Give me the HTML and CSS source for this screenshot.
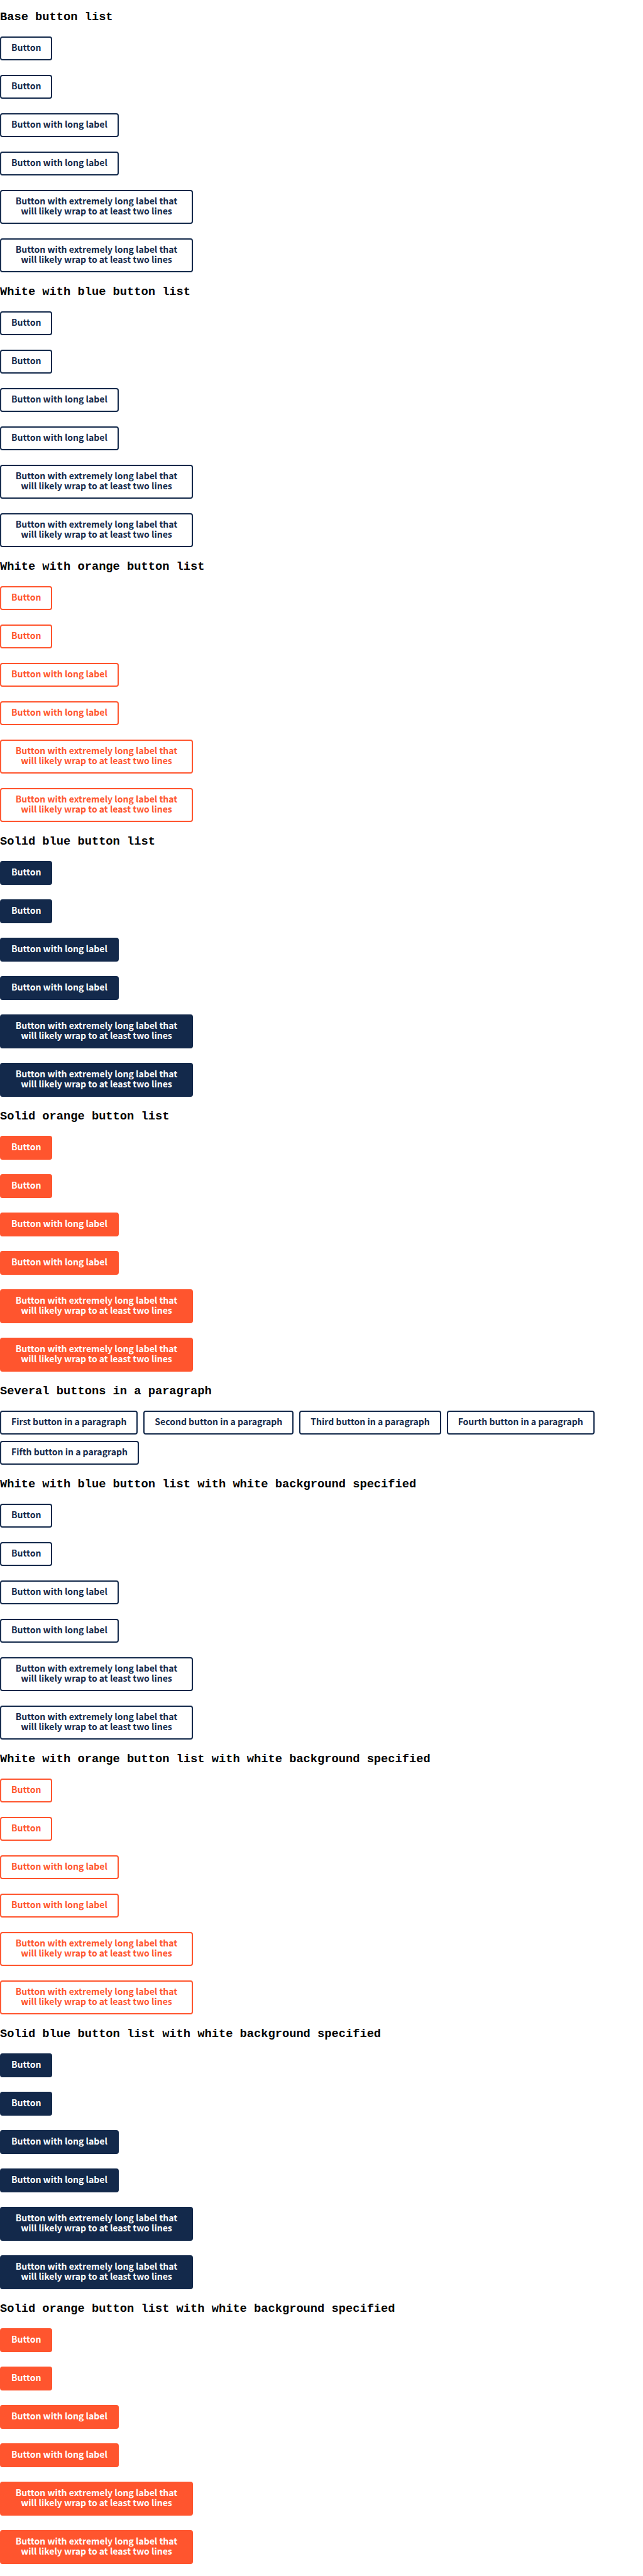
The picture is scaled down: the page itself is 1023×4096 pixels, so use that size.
FILE: index.html
```html
<!DOCTYPE html>
<html lang="en">
<head>
<meta charset="utf-8">
<meta name="viewport" content="width=device-width, initial-scale=1">
<title>Button styles</title>
<link rel="stylesheet" href="styles.css">
</head>
<body>
<main class="page">
<section class="group">
<h3 class="title">Base button list</h3>
<div class="list">
<a class="button" href="#">Button</a>
<button class="button" type="button">Button</button>
<a class="button" href="#">Button with long label</a>
<button class="button" type="button">Button with long label</button>
<a class="button" href="#">Button with extremely long label that will likely wrap to at least two lines</a>
<button class="button" type="button">Button with extremely long label that will likely wrap to at least two lines</button>
</div>
</section>
<section class="group">
<h3 class="title">White with blue button list</h3>
<div class="list">
<a class="button" href="#">Button</a>
<button class="button" type="button">Button</button>
<a class="button" href="#">Button with long label</a>
<button class="button" type="button">Button with long label</button>
<a class="button" href="#">Button with extremely long label that will likely wrap to at least two lines</a>
<button class="button" type="button">Button with extremely long label that will likely wrap to at least two lines</button>
</div>
</section>
<section class="group orange">
<h3 class="title">White with orange button list</h3>
<div class="list">
<a class="button" href="#">Button</a>
<button class="button" type="button">Button</button>
<a class="button" href="#">Button with long label</a>
<button class="button" type="button">Button with long label</button>
<a class="button" href="#">Button with extremely long label that will likely wrap to at least two lines</a>
<button class="button" type="button">Button with extremely long label that will likely wrap to at least two lines</button>
</div>
</section>
<section class="group solid">
<h3 class="title">Solid blue button list</h3>
<div class="list">
<a class="button" href="#">Button</a>
<button class="button" type="button">Button</button>
<a class="button" href="#">Button with long label</a>
<button class="button" type="button">Button with long label</button>
<a class="button" href="#">Button with extremely long label that will likely wrap to at least two lines</a>
<button class="button" type="button">Button with extremely long label that will likely wrap to at least two lines</button>
</div>
</section>
<section class="group orange solid">
<h3 class="title">Solid orange button list</h3>
<div class="list">
<a class="button" href="#">Button</a>
<button class="button" type="button">Button</button>
<a class="button" href="#">Button with long label</a>
<button class="button" type="button">Button with long label</button>
<a class="button" href="#">Button with extremely long label that will likely wrap to at least two lines</a>
<button class="button" type="button">Button with extremely long label that will likely wrap to at least two lines</button>
</div>
</section>
<section class="group">
<h3 class="title">Several buttons in a paragraph</h3>
<p class="paragraph">
<a class="button" href="#">First button in a paragraph</a>
<a class="button" href="#">Second button in a paragraph</a>
<a class="button" href="#">Third button in a paragraph</a>
<a class="button" href="#">Fourth button in a paragraph</a>
<a class="button" href="#">Fifth button in a paragraph</a>
</p>
</section>
<section class="group">
<h3 class="title">White with blue button list with white background specified</h3>
<div class="list">
<a class="button" href="#">Button</a>
<button class="button" type="button">Button</button>
<a class="button" href="#">Button with long label</a>
<button class="button" type="button">Button with long label</button>
<a class="button" href="#">Button with extremely long label that will likely wrap to at least two lines</a>
<button class="button" type="button">Button with extremely long label that will likely wrap to at least two lines</button>
</div>
</section>
<section class="group orange">
<h3 class="title">White with orange button list with white background specified</h3>
<div class="list">
<a class="button" href="#">Button</a>
<button class="button" type="button">Button</button>
<a class="button" href="#">Button with long label</a>
<button class="button" type="button">Button with long label</button>
<a class="button" href="#">Button with extremely long label that will likely wrap to at least two lines</a>
<button class="button" type="button">Button with extremely long label that will likely wrap to at least two lines</button>
</div>
</section>
<section class="group solid">
<h3 class="title">Solid blue button list with white background specified</h3>
<div class="list">
<a class="button" href="#">Button</a>
<button class="button" type="button">Button</button>
<a class="button" href="#">Button with long label</a>
<button class="button" type="button">Button with long label</button>
<a class="button" href="#">Button with extremely long label that will likely wrap to at least two lines</a>
<button class="button" type="button">Button with extremely long label that will likely wrap to at least two lines</button>
</div>
</section>
<section class="group orange solid">
<h3 class="title">Solid orange button list with white background specified</h3>
<div class="list">
<a class="button" href="#">Button</a>
<button class="button" type="button">Button</button>
<a class="button" href="#">Button with long label</a>
<button class="button" type="button">Button with long label</button>
<a class="button" href="#">Button with extremely long label that will likely wrap to at least two lines</a>
<button class="button" type="button">Button with extremely long label that will likely wrap to at least two lines</button>
</div>
</section>
</main>
</body>
</html>
```
FILE: styles.css
```css
*,
*::before,
*::after {
  box-sizing: border-box;
}

body {
  margin: 0;
  background: #fff;
}

.page {
  display: flex;
  flex-direction: column;
  gap: 21px;
  padding: 17px 0;
}

.group {
  --accent: #13294b;
  --fill: #fff;
  --label: var(--accent);
}

.orange {
  --accent: #ff552e;
}

.solid {
  --fill: var(--accent);
  --label: #fff;
}

.title {
  margin: 0 0 21px;
  color: #000;
  font-family: "Liberation Mono", monospace;
  font-weight: 700;
  line-height: 20px;
}

.list {
  display: flex;
  flex-direction: column;
  align-items: flex-start;
  gap: 23px;
}

.paragraph {
  display: flex;
  flex-wrap: wrap;
  gap: 10px 9px;
  margin: 0;
}

.button {
  display: block;
  max-width: 307px;
  margin: 0;
  padding: 7px 16px 11px;
  border: 2px solid var(--accent);
  border-radius: 4px;
  background: var(--fill);
  color: var(--label);
  font-family: "Noto Sans CJK JP", sans-serif;
  font-size: 14px;
  font-weight: 700;
  line-height: 16px;
  text-align: center;
  text-decoration: none;
  cursor: pointer;
}
```
